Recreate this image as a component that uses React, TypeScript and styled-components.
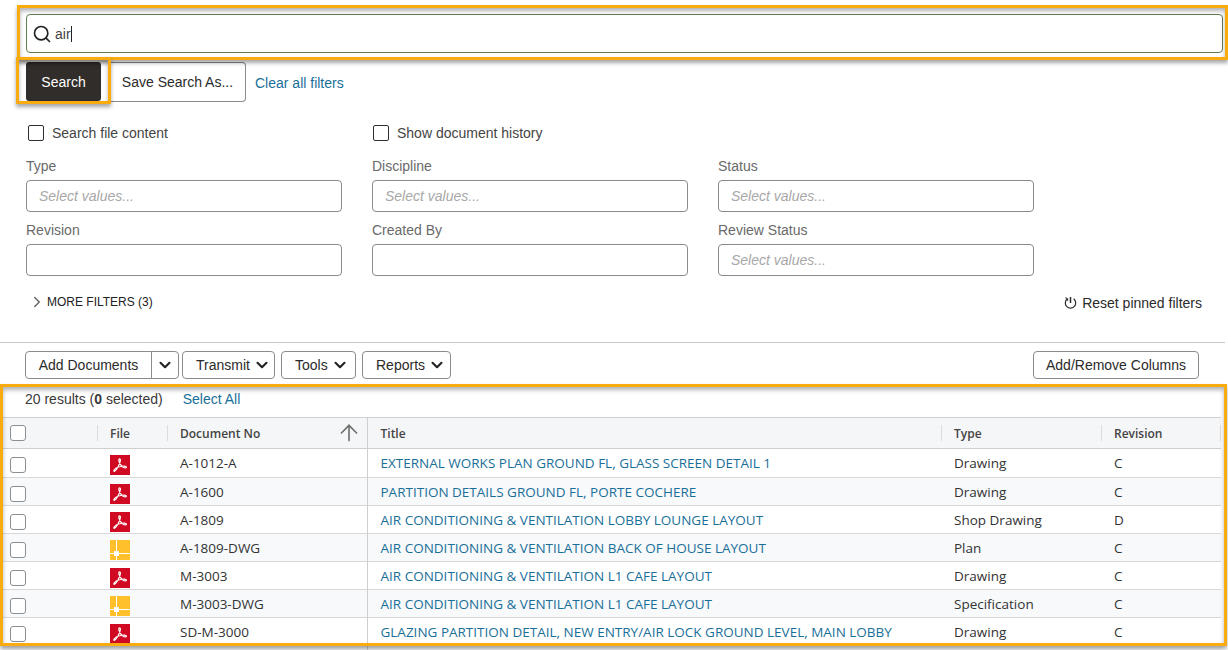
import React from 'react';
import styled, { createGlobalStyle } from 'styled-components';
import { ArrowUp, ChevronDown, ChevronRight, Search } from 'lucide-react';

const GlobalStyle = createGlobalStyle`
  html, body {
    margin: 0;
    padding: 0;
    background: #fff;
  }
  body {
    font-family: "Liberation Sans", Arial, sans-serif;
    color: #2b2b2b;
  }
`;

type Row = { no: string; kind: 'pdf' | 'dwg'; title: string; type: string; rev: string };

const rows: Row[] = [
  { no: 'A-1012-A', kind: 'pdf', title: 'EXTERNAL WORKS PLAN GROUND FL, GLASS SCREEN DETAIL 1', type: 'Drawing', rev: 'C' },
  { no: 'A-1600', kind: 'pdf', title: 'PARTITION DETAILS GROUND FL, PORTE COCHERE', type: 'Drawing', rev: 'C' },
  { no: 'A-1809', kind: 'pdf', title: 'AIR CONDITIONING & VENTILATION LOBBY LOUNGE LAYOUT', type: 'Shop Drawing', rev: 'D' },
  { no: 'A-1809-DWG', kind: 'dwg', title: 'AIR CONDITIONING & VENTILATION BACK OF HOUSE LAYOUT', type: 'Plan', rev: 'C' },
  { no: 'M-3003', kind: 'pdf', title: 'AIR CONDITIONING & VENTILATION L1 CAFE LAYOUT', type: 'Drawing', rev: 'C' },
  { no: 'M-3003-DWG', kind: 'dwg', title: 'AIR CONDITIONING & VENTILATION L1 CAFE LAYOUT', type: 'Specification', rev: 'C' },
  { no: 'SD-M-3000', kind: 'pdf', title: 'GLAZING PARTITION DETAIL, NEW ENTRY/AIR LOCK GROUND LEVEL, MAIN LOBBY', type: 'Drawing', rev: 'C' },
];

const filters = [
  { label: 'Type', placeholder: 'Select values...' },
  { label: 'Discipline', placeholder: 'Select values...' },
  { label: 'Status', placeholder: 'Select values...' },
  { label: 'Revision', placeholder: '' },
  { label: 'Created By', placeholder: '' },
  { label: 'Review Status', placeholder: 'Select values...' },
];

const PdfIcon = () => (
  <svg width="20" height="20" viewBox="0 0 20 20">
    <rect width="20" height="20" fill="#cf0a22" />
    <path
      d="M4.6 16.2C6.8 15 9.8 9.200 10.400 5.600C10.700 3.400 8.700 3.200 8.800 5.200C8.900 7.800 11.400 11.400 13.600 12.500C15 13.200 16.600 13 16.400 12C16.200 11 13.200 11 10.800 11.500C8.200 12 4.900 13.600 4 15.200C3.500 16.200 4 16.500 4.600 16.200Z"
      fill="none"
      stroke="#fff"
      strokeWidth="1.200"
      strokeLinejoin="round"
    />
  </svg>
);

const DwgIcon = () => (
  <svg width="20" height="20" viewBox="0 0 20 20" shapeRendering="crispEdges">
    <rect width="20" height="20" fill="#ffc02b" />
    <path d="M6.500 0v20M0 13.500h20" stroke="#fff" strokeWidth="1" fill="none" />
    <rect x="4" y="11" width="5" height="5" fill="#fff" />
  </svg>
);

const ResetIcon = () => (
  <svg width="13" height="14" viewBox="0 0 13 14" fill="none" stroke="#2b2b2b" strokeWidth="1.200">
    <path d="M3.400 2.800a5.200 5.200 0 1 0 6.200 0" />
    <path d="M6.500 1v6" strokeWidth="1.500" />
    <path d="M1.300 1.800l2.300.8.100 2.300" strokeWidth="1" />
  </svg>
);

const Chevron = () => <ChevronDown size={18} strokeWidth={2.800} color="#222" />;

export default function App() {
  return (
    <Page>
      <GlobalStyle />
      <SearchBar>
        <Callout $top={-9} $right={-5} $bottom={-7} $left={-9} />
        <SearchBox>
          <Search size={20} strokeWidth={2} color="#222" />
          <SearchText>air<Caret /></SearchText>
        </SearchBox>
      </SearchBar>

      <ActionRow>
        <PrimaryWrap>
          <Callout $top={-5} $right={-10} $bottom={-3} $left={-10} />
          <PrimaryButton>Search</PrimaryButton>
        </PrimaryWrap>
        <SaveButton>Save Search As...</SaveButton>
        <ClearLink>Clear all filters</ClearLink>
      </ActionRow>

      <FilterGrid>
        <CheckLabel><Box $left={2} />Search file content</CheckLabel>
        <CheckLabel><Box $left={1} />Show document history</CheckLabel>
        <span />
        {filters.map((f) => (
          <Field key={f.label}>
            <FieldLabel>{f.label}</FieldLabel>
            <FieldInput>{f.placeholder}</FieldInput>
          </Field>
        ))}
      </FilterGrid>

      <MoreRow>
        <MoreFilters>
          <ChevronRight size={18} strokeWidth={2} color="#666" />
          <span>MORE FILTERS (3)</span>
        </MoreFilters>
        <ResetFilters>
          <ResetIcon />
          <span>Reset pinned filters</span>
        </ResetFilters>
      </MoreRow>

      <Divider />

      <Toolbar>
        <AddButton>Add Documents</AddButton>
        <SplitButton><Chevron /></SplitButton>
        <MenuButton $width={93}>Transmit<Chevron /></MenuButton>
        <MenuButton $width={75}>Tools<Chevron /></MenuButton>
        <MenuButton $width={89}>Reports<Chevron /></MenuButton>
        <ColumnsButton>Add/Remove Columns</ColumnsButton>
      </Toolbar>

      <Results>
        <Callout $top={-1} $right={1} $bottom={-1} $left={-3} />
        <Summary>
          <span>20 results (<b>0</b> selected)</span>
          <SelectAll>Select All</SelectAll>
        </Summary>
        <Table>
          <colgroup>
            <col style={{ width: 94 }} />
            <col style={{ width: 70 }} />
            <col style={{ width: 200 }} />
            <col style={{ width: 574 }} />
            <col style={{ width: 160 }} />
            <col style={{ width: 120 }} />
          </colgroup>
          <thead>
            <tr>
              <HeadCell><RowBox $top={-1} /></HeadCell>
              <HeadCell $sep>File</HeadCell>
              <HeadCell $sep>
                Document No
                <SortArrow><ArrowUp size={26} strokeWidth={1.500} color="#6d6d6d" /></SortArrow>
              </HeadCell>
              <HeadCell $line>Title</HeadCell>
              <HeadCell $sep>Type</HeadCell>
              <HeadCell $sep $end>Revision</HeadCell>
            </tr>
          </thead>
          <tbody>
            {rows.map((r) => (
              <BodyRow key={r.no}>
                <Cell><RowBox $top={4} /></Cell>
                <Cell><IconWrap>{r.kind === 'pdf' ? <PdfIcon /> : <DwgIcon />}</IconWrap></Cell>
                <Cell>{r.no}</Cell>
                <TitleCell>{r.title}</TitleCell>
                <Cell>{r.type}</Cell>
                <Cell>{r.rev}</Cell>
              </BodyRow>
            ))}
            <BodyRow>
              <Cell colSpan={3} />
              <TitleCell />
              <Cell colSpan={2} />
            </BodyRow>
          </tbody>
        </Table>
      </Results>
    </Page>
  );
}

const Page = styled.div`
  width: 1228px;
  height: 650px;
  overflow: hidden;
  background: #fff;
`;

const Callout = styled.div<{ $top: number; $right: number; $bottom: number; $left: number }>`
  position: absolute;
  top: ${(p) => p.$top}px;
  right: ${(p) => p.$right}px;
  bottom: ${(p) => p.$bottom}px;
  left: ${(p) => p.$left}px;
  border: 3px solid #f9ab10;
  box-shadow: 0 3px 4px rgba(0, 0, 0, 0.35), inset 0 3px 4px rgba(0, 0, 0, 0.3);
  pointer-events: none;
  z-index: 2;
`;

const SearchBar = styled.div`
  position: relative;
  margin: 14px 5px 0 26px;
`;

const SearchBox = styled.div`
  height: 39px;
  box-sizing: border-box;
  border: 1px solid #5f7d4e;
  border-radius: 4px;
  display: flex;
  align-items: center;
  padding-left: 5px;
  gap: 3px;
`;

const SearchText = styled.span`
  font-size: 14px;
  color: #444;
  display: flex;
  align-items: center;
`;

const Caret = styled.i`
  display: inline-block;
  width: 1px;
  height: 16px;
  background: #222;
`;

const ActionRow = styled.div`
  display: flex;
  align-items: center;
  margin: 9px 0 0 26px;
  height: 39px;
`;

const PrimaryWrap = styled.div`
  position: relative;
  margin-right: 9px;
`;

const PrimaryButton = styled.div`
  width: 75px;
  height: 39px;
  border-radius: 3px;
  background: #312d2a;
  color: #fff;
  font-size: 14px;
  display: flex;
  align-items: center;
  justify-content: center;
`;

const SaveButton = styled.div`
  width: 136px;
  height: 40px;
  box-sizing: border-box;
  border: 1px solid #8b8b8b;
  border-left: none;
  border-radius: 0 4px 4px 0;
  font-size: 14px;
  display: flex;
  align-items: center;
  justify-content: center;
  color: #2b2b2b;
`;

const ClearLink = styled.span`
  margin-left: 9px;
  font-size: 14px;
  color: #1a6f99;
  padding-top: 2px;
`;

const FilterGrid = styled.div`
  display: grid;
  grid-template-columns: repeat(3, 316px);
  column-gap: 30px;
  margin: 24px 0 0 26px;
`;

const CheckLabel = styled.label`
  display: flex;
  align-items: center;
  height: 16px;
  font-size: 14px;
  color: #444;
  margin-bottom: 17px;
`;

const Box = styled.span<{ $left: number }>`
  width: 16px;
  height: 16px;
  box-sizing: border-box;
  border: 1px solid #2e2e2e;
  border-radius: 2px;
  margin: 0 8px 0 ${(p) => p.$left}px;
`;

const Field = styled.div`
  height: 64px;
`;

const FieldLabel = styled.div`
  font-size: 14px;
  line-height: 16px;
  height: 16px;
  margin-bottom: 6px;
  color: #6a6a6a;
`;

const FieldInput = styled.div`
  height: 32px;
  box-sizing: border-box;
  border: 1px solid #8b8b8b;
  border-radius: 4px;
  padding-left: 12px;
  display: flex;
  align-items: center;
  font-size: 14px;
  font-style: italic;
  color: #a8a8a8;
`;

const MoreRow = styled.div`
  display: flex;
  justify-content: space-between;
  align-items: flex-start;
  margin: 8px 26px 0 28px;
  height: 48px;
`;

const MoreFilters = styled.div`
  display: flex;
  align-items: center;
  gap: 1px;
  font-size: 12px;
  color: #222;
  height: 16px;
`;

const ResetFilters = styled.div`
  display: flex;
  align-items: center;
  gap: 5px;
  font-size: 14px;
  color: #2b2b2b;
  height: 16px;
  margin-top: 1px;
`;

const Divider = styled.div`
  height: 1px;
  background: #c9c9c9;
  margin-right: 3px;
`;

const Toolbar = styled.div`
  display: flex;
  align-items: center;
  margin: 7px 29px 0 25px;
  height: 30px;
`;

const ToolButton = styled.div`
  height: 28px;
  box-sizing: border-box;
  border: 1px solid #8b8b8b;
  border-radius: 4px;
  font-size: 14px;
  color: #2b2b2b;
  display: flex;
  align-items: center;
`;

const AddButton = styled(ToolButton)`
  width: 127px;
  justify-content: center;
  border-radius: 4px 0 0 4px;
  margin-right: -1px;
`;

const SplitButton = styled(ToolButton)`
  width: 28px;
  justify-content: center;
  border-radius: 0 4px 4px 0;
  margin-right: 3px;
`;

const MenuButton = styled(ToolButton)<{ $width: number }>`
  width: ${(p) => p.$width}px;
  padding-left: 13px;
  gap: 3px;
  margin-right: 6px;
`;

const ColumnsButton = styled(ToolButton)`
  width: 166px;
  justify-content: center;
  margin-left: auto;
`;

const Results = styled.div`
  position: relative;
  margin: 5px 0 0 3px;
  height: 260px;
`;

const Summary = styled.div`
  height: 28px;
  padding-bottom: 4px;
  display: flex;
  align-items: center;
  padding-left: 22px;
  gap: 20px;
  font-size: 14px;
  color: #3a3a3a;
`;

const SelectAll = styled.span`
  color: #1a6f99;
`;

const Table = styled.table`
  width: 1218px;
  table-layout: fixed;
  border-collapse: collapse;
  font-family: "Open Sans", "Noto Sans", sans-serif;
  font-size: 13.500px;
`;

const HeadCell = styled.th<{ $sep?: boolean; $line?: boolean; $end?: boolean }>`
  position: relative;
  height: 31px;
  padding: 0 0 0 13px;
  box-sizing: border-box;
  text-align: left;
  font-size: 12px;
  font-weight: 600;
  color: #444;
  background: #f5f6f7;
  border-top: 1px solid #cfcfcf;
  border-bottom: 1px solid #cfcfcf;
  border-left: ${(p) => (p.$line ? '1px solid #cfcfcf' : 'none')};
  &:first-child {
    padding-left: 7px;
  }
  ${(p) =>
    p.$sep
      ? `&::before {
    content: '';
    position: absolute;
    left: 0;
    top: 7px;
    bottom: 7px;
    width: 1px;
    background: #dcdcdc;
  }`
      : ''}
  ${(p) =>
    p.$end
      ? `&::after {
    content: '';
    position: absolute;
    right: 0;
    top: 7px;
    bottom: 7px;
    width: 1px;
    background: #dcdcdc;
  }`
      : ''}
`;

const SortArrow = styled.span`
  position: absolute;
  right: 5px;
  top: 2px;
`;

const BodyRow = styled.tr`
  height: 28px;
  border-bottom: 1px solid #d8d8d8;
  &:nth-child(even) {
    background: #f7f9fb;
  }
  &:first-child {
    height: 29px;
  }
`;

const Cell = styled.td`
  padding: 0 0 0 13px;
  color: #333;
  white-space: nowrap;
  overflow: hidden;
  &:first-child {
    padding: 0 0 0 7px;
  }
`;

const TitleCell = styled(Cell)`
  color: #1a6f99;
  border-left: 1px solid #cfcfcf;
`;

const RowBox = styled.span<{ $top: number }>`
  display: block;
  width: 16px;
  height: 16px;
  box-sizing: border-box;
  border: 1px solid #8a8f94;
  border-radius: 3px;
  background: #fff;
  margin-top: ${(p) => p.$top}px;
`;

const IconWrap = styled.span`
  display: flex;
  margin-top: 4px;
`;
